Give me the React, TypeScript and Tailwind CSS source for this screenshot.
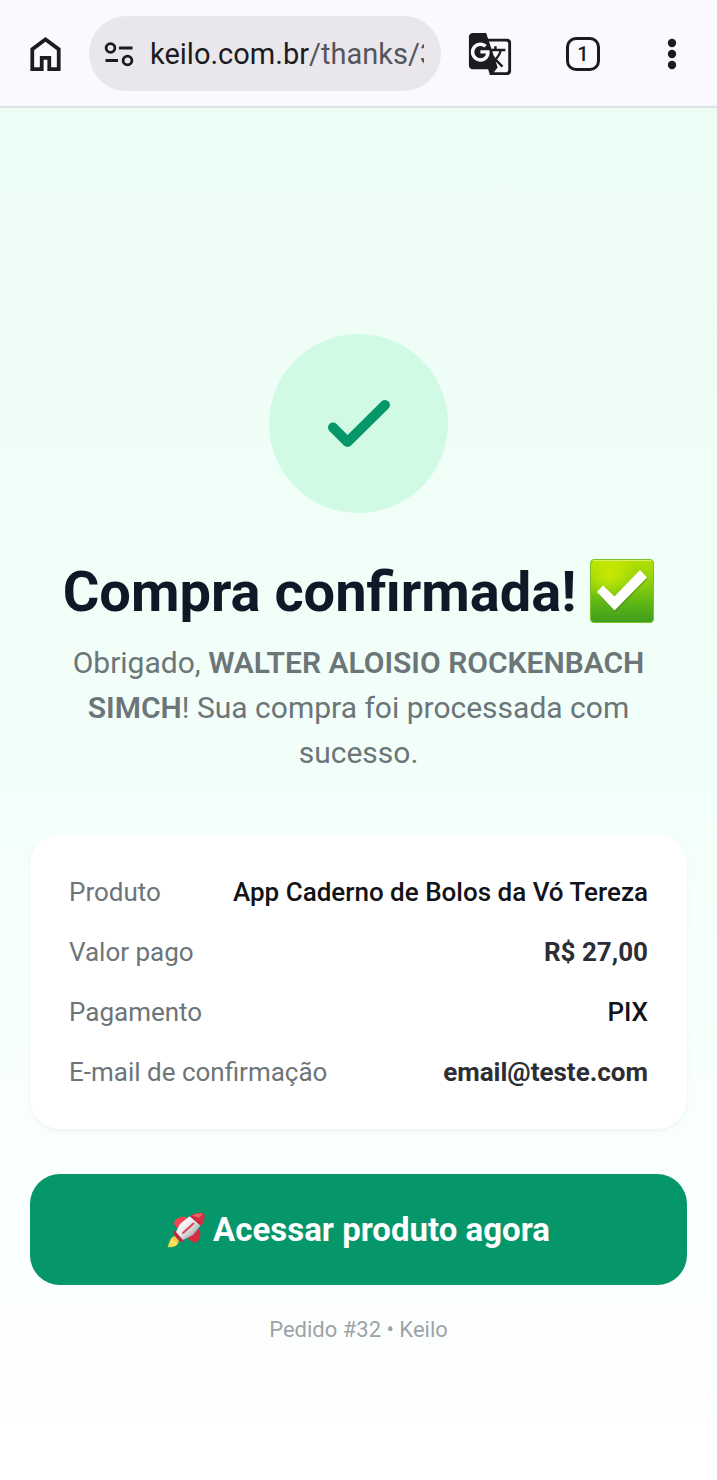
import { MdGTranslate } from "react-icons/md";

function HomeIcon() {
  return (
    <svg viewBox="4 3 16 18" className="h-[34px] w-[31px]" fill="currentColor" aria-hidden="true">
      <path d="M6 19h3v-6h6v6h3v-9l-6-4.500L6 10v9Zm-2 2V9l8-6 8 6v12h-7v-6h-2v6H4Z" />
    </svg>
  );
}

function SiteInfoIcon() {
  return (
    <svg viewBox="0 0 30 26" className="h-[26px] w-[30px] shrink-0" fill="none" stroke="currentColor" strokeWidth="2.8" aria-hidden="true">
      <circle cx="6.5" cy="7" r="4.4" />
      <path d="M15 7h13.5M1.5 19.5H14" />
      <circle cx="23.5" cy="19.5" r="4.4" />
    </svg>
  );
}

function CheckEmoji() {
  return (
    <svg viewBox="0 0 64 64" className="inline-block size-16 align-top" role="img" aria-label="✅">
      <defs>
        <linearGradient id="check-fill" x1="0" y1="0" x2="0" y2="1">
          <stop offset="0" stopColor="#b4e000" />
          <stop offset="0.35" stopColor="#8fd20c" />
          <stop offset="0.7" stopColor="#5db616" />
          <stop offset="1" stopColor="#3f9d1d" />
        </linearGradient>
        <radialGradient id="check-glow" cx="0.3" cy="0.22" r="0.45">
          <stop offset="0" stopColor="#d6ee00" stopOpacity="0.8" />
          <stop offset="1" stopColor="#d6ee00" stopOpacity="0" />
        </radialGradient>
      </defs>
      <rect x="0.5" y="0.5" width="63" height="63" rx="3.5" fill="url(#check-fill)" stroke="#7cc02a" />
      <rect x="1" y="1" width="62" height="62" rx="3" fill="url(#check-glow)" />
      <path d="M3 1.5h58" stroke="#d8ef70" />
      <path d="M7.500 34.500l6-6.500 11.500 11 25.500-26.500 7 7.500-32.500 33.500z" fill="#3b7f12" opacity="0.45" />
      <path d="M7 33l6-6.500 11.500 11L50 11l7 7.500-32.500 33z" fill="#fff" />
    </svg>
  );
}

function RocketEmoji() {
  return (
    <svg viewBox="0 0 38 36" className="inline-block h-9 w-[38px] align-top" role="img" aria-label="🚀">
      <defs>
        <linearGradient id="rocket-body" x1="0.2" y1="0.2" x2="0.8" y2="0.8">
          <stop offset="0" stopColor="#ffffff" />
          <stop offset="0.5" stopColor="#e4e4e6" />
          <stop offset="1" stopColor="#9fa6a9" />
        </linearGradient>
        <linearGradient id="rocket-flame" x1="1" y1="0" x2="0" y2="1">
          <stop offset="0" stopColor="#f79329" />
          <stop offset="0.5" stopColor="#ffe55c" />
          <stop offset="1" stopColor="#d9d23f" />
        </linearGradient>
      </defs>
      <path d="M8 24c-4 0-5 5-7.500 11C6 36 11 34 12 29z" fill="url(#rocket-flame)" />
      <path d="M20 5C14 4 7 6 7 12l6 8z" fill="#ee4655" />
      <path d="M32 17c3 6 1 13-5 14l-8-6z" fill="#d42c42" />
      <path d="M7 19c-2 2 5 11 9 11l1-3-7-8z" fill="#c9263c" />
      <path d="M9 20L13 12 23 4l11 9-8 10-10 5z" fill="url(#rocket-body)" />
      <path d="M23 4C28 1 34 0 37 1.500 38.500 5 37 10 34 14z" fill="#d62c40" />
      <path d="M25 3.600C29 1.400 33 1 36 1.800l-4 4z" fill="#ee6670" />
      <path d="M27 11L15.500 21.500" stroke="#d9485a" strokeWidth="2.200" />
      <path d="M23 4l11 9.500" stroke="#a91e36" strokeWidth="0.8" />
    </svg>
  );
}

const rows = [
  { label: "Produto", value: "App Caderno de Bolos da Vó Tereza", style: "font-medium text-[#111318]" },
  { label: "Valor pago", value: "R$ 27,00", style: "font-bold text-[#2d2e35]" },
  { label: "Pagamento", value: "PIX", style: "font-medium text-[#111318]" },
  { label: "E-mail de confirmação", value: "email@teste.com", style: "font-bold text-[#2d2e35]" },
];

function BrowserBar() {
  return (
    <header className="flex items-center border-b-2 border-[#dce3e4] bg-[#faf9ff] pt-4 pr-10 pb-[15px] pl-[30px] text-[#1b1b21]">
      <button type="button" aria-label="Página inicial">
        <HomeIcon />
      </button>
      <button
        type="button"
        className="ml-7 flex h-[75px] min-w-0 flex-1 items-center gap-4 rounded-full bg-[#e9e7ec] pr-[17px] pl-[15px] text-left"
      >
        <SiteInfoIcon />
        <span className="min-w-0 flex-1 overflow-hidden text-[29px] leading-10 whitespace-nowrap">
          keilo.com.br<span className="text-[#55555b]">/thanks/32</span>
        </span>
      </button>
      <button type="button" aria-label="Traduzir" className="ml-[26px]">
        <MdGTranslate className="size-[46px]" />
      </button>
      <button
        type="button"
        aria-label="1 guia aberta"
        className="ml-[53px] flex size-[34px] items-center justify-center rounded-[10px] border-[3px] border-current text-xl font-medium"
      >
        1
      </button>
      <button type="button" aria-label="Mais opções" className="ml-[67px]">
        <svg viewBox="0 0 10 32" className="h-8 w-[10px]" fill="currentColor" aria-hidden="true">
          <circle cx="5" cy="5" r="4.2" />
          <circle cx="5" cy="16" r="4.2" />
          <circle cx="5" cy="27" r="4.2" />
        </svg>
      </button>
    </header>
  );
}

export default function App() {
  return (
    <div className="flex min-h-screen flex-col bg-white font-[Roboto,sans-serif]">
      <BrowserBar />
      <main className="flex flex-1 flex-col items-center bg-linear-to-b from-[#ecfdf5] via-[#f3fffa] to-white px-[30px] pt-[226px] pb-16">
        <div className="flex size-[179px] items-center justify-center rounded-full bg-[#d1fae5]">
          <svg viewBox="0 0 62 48" className="h-12 w-[62px]" fill="none" stroke="#059669" strokeWidth="10" strokeLinecap="round" strokeLinejoin="round" aria-hidden="true">
            <path d="M5 27.500L19.500 42 57 5" />
          </svg>
        </div>
        <h1 className="mt-[46px] text-center text-[56px] leading-[67px] font-bold text-gray-900">
          Compra confirmada! <CheckEmoji />
        </h1>
        <p className="mt-[14px] text-center text-[30px] leading-[45px] text-[#6c7578]">
          Obrigado, <strong className="font-semibold">WALTER ALOISIO ROCKENBACH SIMCH</strong>! Sua compra foi processada
          com sucesso.
        </p>
        <dl className="mt-[60px] flex w-full flex-col gap-[22px] rounded-[30px] bg-white px-[39px] py-[38px] text-[26px] leading-[38px] shadow-[0_2px_4px_rgba(0,0,0,0.05)]">
          {rows.map((row) => (
            <div key={row.label} className="flex justify-between gap-4">
              <dt className="text-[#6c7578]">{row.label}</dt>
              <dd className={row.style}>{row.value}</dd>
            </div>
          ))}
        </dl>
        <button
          type="button"
          className="mt-[45px] flex w-full items-center justify-center gap-2 rounded-[30px] bg-[#059669] py-8 text-[33px] leading-[47px] font-bold text-white"
        >
          <RocketEmoji />
          Acessar produto agora
        </button>
        <p className="mt-7 text-center text-[22px] leading-[34px] text-[#9ca3a9]">Pedido #32 • Keilo</p>
      </main>
    </div>
  );
}
